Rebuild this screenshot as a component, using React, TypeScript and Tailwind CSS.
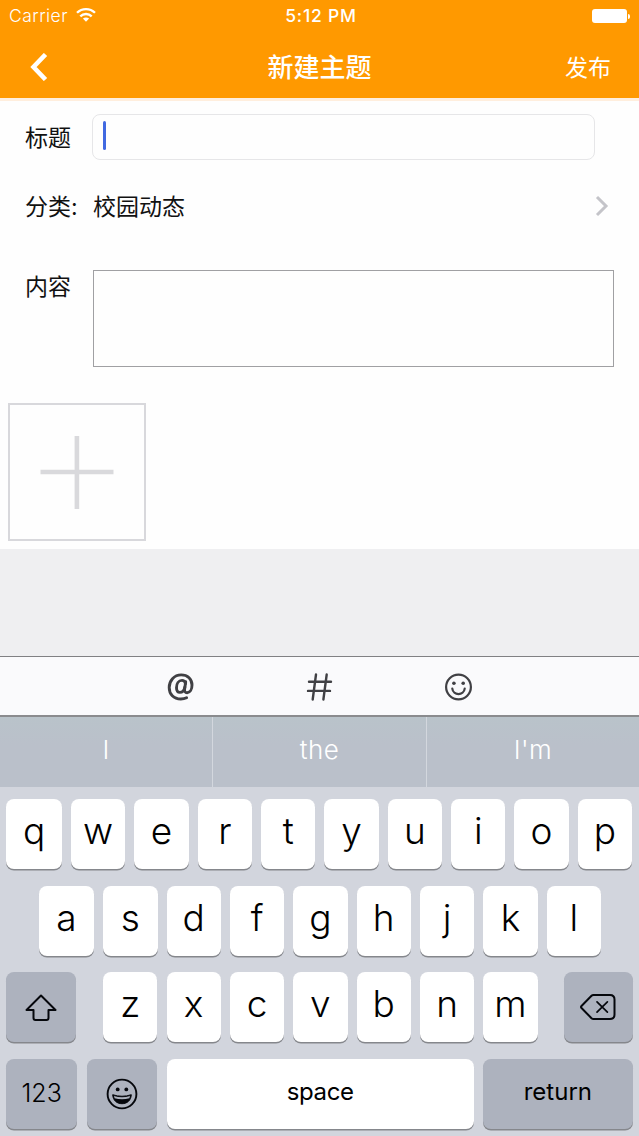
import React from "react";
import clsx from "clsx";

type KeyProps = {
  className?: string;
  dark?: boolean;
  children: React.ReactNode;
};

const suggestions = ["I", "the", "I'm"];
const topRow = ["q", "w", "e", "r", "t", "y", "u", "i", "o", "p"];
const middleRow = ["a", "s", "d", "f", "g", "h", "j", "k", "l"];
const bottomRow = ["z", "x", "c", "v", "b", "n", "m"];

function Key({ className, dark, children }: KeyProps) {
  return (
    <button
      className={clsx(
        "flex h-[70px] items-center justify-center rounded-[8px] text-black shadow-[0_1.5px_0_#85878c]",
        dark ? "bg-[#adb2be]" : "bg-white",
        className
      )}
    >
      {children}
    </button>
  );
}

function Letter({ children, className }: KeyProps) {
  return (
    <Key className={clsx("pb-[7px] text-[37px] leading-none font-[350]", className)}>
      {children}
    </Key>
  );
}

function StatusBar() {
  return (
    <div className="grid h-8 grid-cols-3 items-center pr-[9px] pl-[9px] font-['Inter'] text-[17px] text-white">
      <div className="flex items-center gap-[8px]">
        <span className="text-[17.5px] leading-8 font-[350] tracking-[0.45px]">Carrier</span>
        <svg width="20" height="16" viewBox="0 0 20 16" fill="none" stroke="white" strokeWidth="2.3" className="-mt-[2px]">
          <path d="M1 5.8C6 .8 14 .8 19 5.8" />
          <path d="M4.3 9.400c3.2-3.2 8.2-3.2 11.4 0" />
          <path d="M10 14.7l-3.1-3.1c1.700-1.600 4.500-1.600 6.200 0z" fill="white" stroke="none" />
        </svg>
      </div>
      <span className="pl-[3px] text-center text-[17.5px] leading-8 font-medium tracking-[0.8px]">5:12 PM</span>
      <div className="flex items-center justify-end gap-[1px]">
        <div className="h-[14px] w-[35px] rounded-[3px] bg-white" />
        <div className="h-[5px] w-[2px] rounded-r-full bg-white" />
      </div>
    </div>
  );
}

function Header() {
  return (
    <header className="h-[98px] shrink-0 bg-[#ff9900] text-white">
      <StatusBar />
      <div className="grid h-[66px] grid-cols-3 items-center pr-[28px] pl-[30px]">
        <svg width="18" height="28" viewBox="0 0 18 28" fill="none" stroke="white" strokeWidth="4.6" className="mt-[4px]">
          <path d="M15.5 1.5L3.5 14l12 12.5" />
        </svg>
        <h1 className="-ml-[2px] pt-[5px] text-center text-[26px] leading-none font-medium">新建主题</h1>
        <button className="justify-self-end pt-[6px] text-[23px] leading-none">发布</button>
      </div>
    </header>
  );
}

function TopicForm() {
  return (
    <main className="h-[451px] shrink-0 border-t-[3px] border-[#ffeedd] bg-[#fefefe] text-[23px] leading-none text-[#111]">
      {/* title */}
      <div className="flex h-[46px] items-center mt-[13px] pl-[25px]">
        <label className="w-[67px] pt-[2px]">标题</label>
        <div className="flex h-[46px] w-[503px] items-center rounded-[8px] border-[1.5px] border-[#e6e6e8] pl-[10px]">
          <div className="-mt-[3px] h-[29px] w-[3px] rounded-full bg-[#4169e1]" />
        </div>
      </div>

      {/* category */}
      <div className="flex h-[46px] items-center mt-[23px] pr-[30px] pl-[25px]">
        <span className="w-[68px] pt-[2px]">分类:</span>
        <span className="pt-[2px]">校园动态</span>
        <svg width="14" height="22" viewBox="0 0 14 22" fill="none" stroke="#c4c4c9" strokeWidth="3" className="ml-auto">
          <path d="M2 2l9 9-9 9" />
        </svg>
      </div>

      {/* content */}
      <div className="flex mt-[41px] pl-[25px]">
        <label className="w-[68px] pt-[6px]">内容</label>
        <div className="h-[97px] w-[521px] border-[1.5px] border-[#a0a0a3]" />
      </div>

      {/* add picture */}
      <button className="flex h-[138px] w-[138px] items-center justify-center mt-[36px] ml-[8px] border-2 border-[#d8d8dc]">
        <svg width="74" height="74" viewBox="0 0 74 74" fill="none" stroke="#d9d9dc" strokeWidth="4.6">
          <path d="M36.900 1v73M.5 37h73" />
        </svg>
      </button>
    </main>
  );
}

function Toolbar() {
  return (
    <div className="flex h-[61px] shrink-0 items-center gap-[111px] border-t-[1.5px] border-b-2 border-t-[#808083] border-b-[#8a8b8e] bg-[#fafafc] pt-px pl-[166px]">
      <svg width="28" height="30" viewBox="0 0 28 30" fill="none" stroke="#404044" strokeWidth="2.900" strokeLinecap="round" strokeLinejoin="round">
        <path d="M20.600 25.700c-1.800.9-3.800 1.300-5.800 1.300C7.600 27 3.200 22.200 3.200 15.500S8 2.900 15.200 2.900c6.500 0 10.800 4.100 10.800 10.100 0 4.500-2.100 7.700-4.900 7.700-2 0-2.800-1.500-2.500-3.500l1.100-7.400" />
        <path d="M19.500 11.600c-.5-2-1.700-3.200-3.500-3.200-3.400 0-5.500 3.500-5.500 7.300 0 2.900 1.200 4.700 3.400 4.700 2.500 0 4.300-2.300 4.900-5.200" />
      </svg>
      <svg width="28" height="30" viewBox="0 0 28 30" fill="none" stroke="#404044" strokeWidth="2.400" strokeLinecap="round">
        <path d="M11 2.500L7.700 27.500M21.700 2.500l-3.300 25M4 9.800h22M3 18.900h22" />
      </svg>
      <svg width="28" height="30" viewBox="0 0 28 30" fill="none" stroke="#404044" strokeWidth="2.200" strokeLinecap="round">
        <circle cx="14.500" cy="15" r="12.400" />
        <path d="M8.300 16.700c.8 7.100 11.600 7.100 12.400 0" />
        <circle cx="9.900" cy="11.200" r="1.800" fill="#404044" stroke="none" />
        <circle cx="19.200" cy="11.200" r="1.800" fill="#404044" stroke="none" />
      </svg>
    </div>
  );
}

function Keyboard() {
  return (
    <div className="h-[419px] bg-[#d2d5dd] font-['Inter']">
      {/* suggestions */}
      <div className="grid h-[70px] grid-cols-[213px_214px_212px] divide-x-[1.5px] divide-[#d3d7de] bg-linear-to-b from-[#b9c3ca] to-[#bac0ca] to-40% text-[26px] leading-none font-[350] tracking-[0.4px] text-white">
        {suggestions.map((word) => (
          <div key={word} className="flex items-center justify-center pb-[4px]">
            {word}
          </div>
        ))}
      </div>

      <div className="flex flex-col gap-[16.6px] pt-[12px]">
        <div className="flex gap-[9.05px] pl-[6.3px]">
          {topRow.map((letter) => (
            <Letter key={letter} className="w-[54.3px] first:w-[55.7px]">
              {letter}
            </Letter>
          ))}
        </div>

        <div className="flex gap-[9.05px] pl-[38.7px]">
          {middleRow.map((letter) => (
            <Letter key={letter} className="w-[54.3px] first:w-[55.5px]">
              {letter}
            </Letter>
          ))}
        </div>

        <div className="flex pl-[6.3px]">
          <Key dark className="w-[69.4px]">
            <svg width="34" height="30" viewBox="0 0 34 30" fill="none" stroke="#05070c" strokeWidth="2" strokeLinejoin="round" className="mt-px ml-px">
              <path d="M17 2.500L31.500 17h-7v8q0 2-2 2h-11q-2 0-2-2v-8h-7z" />
            </svg>
          </Key>
          <div className="ml-[27.5px] flex gap-[9.05px]">
            {bottomRow.map((letter) => (
              <Letter key={letter} className="w-[54.3px]">
                {letter}
              </Letter>
            ))}
          </div>
          <Key dark className="ml-[26px] w-[69.2px]">
            <svg width="36" height="28" viewBox="0 0 36 28" fill="none" stroke="#05070c" strokeWidth="2" strokeLinejoin="round">
              <path d="M13.500 2H30q4.500 0 4.500 4.500v15Q34.500 26 30 26H13.500q-1.200 0-2-.8L1.500 15q-1-1 0-2l10-10.200q.8-.8 2-.8z" />
              <path d="M17 8.800l10.400 10.400M27.400 8.800L17 19.200" strokeWidth="1.700" strokeLinecap="round" />
            </svg>
          </Key>
        </div>

        <div className="flex pl-[6.3px] text-[24px] leading-none">
          <Key dark className="w-[70.7px] text-[25px] font-[350]">123</Key>
          <Key dark className="ml-[9.7px] w-[70.4px]">
            <svg width="32" height="32" viewBox="0 0 32 32" fill="none" stroke="#05070c" strokeWidth="1.9">
              <circle cx="16" cy="16" r="14.4" />
              <circle cx="11.700" cy="11.400" r="1.900" fill="#05070c" stroke="none" />
              <circle cx="20.300" cy="11.400" r="1.900" fill="#05070c" stroke="none" />
              <path d="M6.700 16.700Q16 19.800 25.300 16.700C25 22.500 21 25.700 16 25.700S7 22.500 6.700 16.700z" fill="#05070c" strokeWidth="1" />
              <path d="M8 17.900q8 2.500 16 0l-.6 2.400q-7.400 2-14.800 0z" fill="#adb2be" stroke="none" />
            </svg>
          </Key>
          <Key className="ml-[9.5px] w-[307.3px] pb-[4px] tracking-[-0.4px]">space</Key>
          <Key dark className="ml-[9.3px] w-[149.4px] pb-[4px]">return</Key>
        </div>
      </div>
    </div>
  );
}

export default function App() {
  return (
    <div className="flex h-[1136px] w-[639px] flex-col overflow-hidden bg-[#efeff1] font-['Inter','Noto_Sans_CJK_SC',sans-serif]">
      <Header />
      <TopicForm />
      <div className="h-[107px] shrink-0" />
      <Toolbar />
      <Keyboard />
    </div>
  );
}
